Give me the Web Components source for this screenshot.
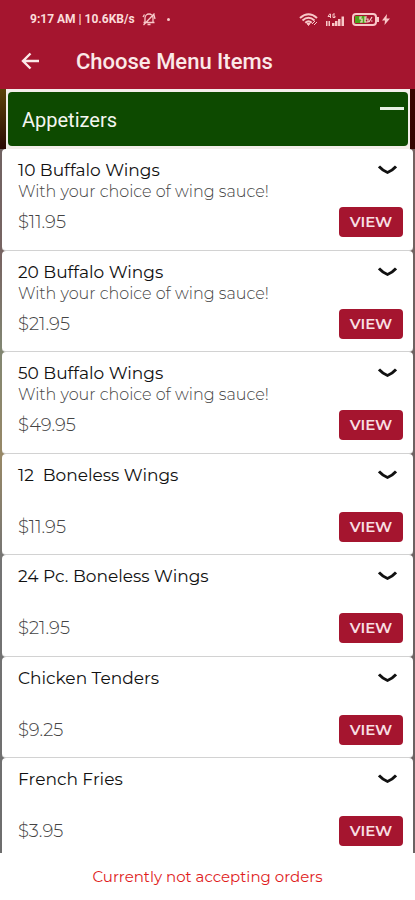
<!DOCTYPE html>
<html lang="en">
<head>
<meta charset="utf-8">
<meta name="viewport" content="width=device-width, initial-scale=1">
<title>Choose Menu Items</title>
<style>
  html,
  body {
    height: 100%;
    margin: 0;
  }
  body {
    --brand: #a5152f;
    --brand-text: #fbe9e8;
    --category: #0d4a00;
    --font-app: Roboto, sans-serif;
    font-family: Montserrat, Inter, sans-serif;
    color: #111;
  }
</style>
</head>
<body>
<menu-screen>
  <status-bar slot="top" time="9:17 AM" speed="10.6KB/s"></status-bar>
  <app-bar slot="top">Choose Menu Items</app-bar>
  <menu-category>Appetizers</menu-category>
  <menu-list></menu-list>
  <order-notice slot="bottom">Currently not accepting orders</order-notice>
</menu-screen>

<script>
const MENU_ITEMS = [
  { name: "10 Buffalo Wings", description: "With your choice of wing sauce!", price: "$11.95" },
  { name: "20 Buffalo Wings", description: "With your choice of wing sauce!", price: "$21.95" },
  { name: "50 Buffalo Wings", description: "With your choice of wing sauce!", price: "$49.95" },
  { name: "12  Boneless Wings", description: "", price: "$11.95" },
  { name: "24 Pc. Boneless Wings", description: "", price: "$21.95" },
  { name: "Chicken Tenders", description: "", price: "$9.25" },
  { name: "French Fries", description: "", price: "$3.95" },
];

// Page frame: fixed top and bottom, list in between
class MenuScreen extends HTMLElement {
  constructor() {
    super();
    this.attachShadow({ mode: "open" });
  }

  connectedCallback() {
    this.shadowRoot.innerHTML = `
      <style>
        :host {
          display: flex;
          flex-direction: column;
          height: 100vh;
        }
        header {
          background: var(--brand);
        }
        main {
          flex: 1;
          min-height: 0;
          overflow: hidden;
          background:
            linear-gradient(#5a4208, #2a0905 8%, #3a0a06 22%, #54602f 34%, #8a6410 48%, #333 62%, #222) left / 50% 100% no-repeat,
            linear-gradient(#3a0500, #260404 30%, #1c0808) right / 50% 100% no-repeat;
        }
      </style>
      <header><slot name="top"></slot></header>
      <main><slot></slot></main>
      <slot name="bottom"></slot>
    `;
  }
}

class StatusBar extends HTMLElement {
  constructor() {
    super();
    this.attachShadow({ mode: "open" });
  }

  connectedCallback() {
    this.shadowRoot.innerHTML = `
      <style>
        :host {
          display: flex;
          align-items: center;
          justify-content: space-between;
          height: 38px;
          padding: 0 25px 0 30px;
          color: #f8c8c8;
          font: 700 12px/14px var(--font-app);
        }
        .side {
          display: flex;
          align-items: center;
          gap: 2px;
        }
        .label {
          color: #fbdcda;
        }
        .icons {
          gap: 7px;
        }
        .power {
          display: flex;
          align-items: center;
          gap: 3px;
        }
        .dot {
          width: 3px;
          height: 3px;
          margin-left: 9px;
          border-radius: 50%;
          background: currentColor;
        }
        .bell {
          margin-left: 5px;
        }
        svg {
          display: block;
        }
      </style>
      <div class="side">
        <span class="label">${this.getAttribute("time")} | ${this.getAttribute("speed")}</span>
        <svg class="bell" width="14" height="14" viewBox="0 0 14 14" fill="none" stroke="currentColor" stroke-width="1.3">
          <path d="M3 10.500V6a4 4 0 0 1 8 0v4.500M1.500 10.500h11M5.500 12.500h3M1.500 13L12.500 1.500M1 5l1.500-2.500M13 7l-1-4"/>
        </svg>
        <span class="dot"></span>
      </div>
      <div class="side icons">
        <svg width="19" height="13" viewBox="0 0 19 13" fill="none" stroke="currentColor" stroke-width="2">
          <path d="M1 5Q9.500-2.500 18 5M3.500 7.500Q9.500 2 15.500 7.500M6.300 9.800Q9.500 7 12.700 9.800"/>
          <path d="M8 10.500h3l-1.500 2zM13 11l3-3M15 12l3-3" fill="currentColor" stroke-width="1"/>
        </svg>
        <svg width="20" height="13" viewBox="0 0 20 13" fill="currentColor">
          <path d="M7 10h2.500v3H7zM10 8h2.500v5H10zM13 6h2.500v7H13zM16.500 3.500H19V13h-2.500zM1 8h1.500v5H1zM3.500 8H5v5H3.500z"/>
          <path d="M5 .5L3 3.500h3M5.500 1v4M10 1H8v3.500h2V3H9" fill="none" stroke="currentColor"/>
        </svg>
        <div class="power">
          <svg width="27" height="13" viewBox="0 0 27 13">
            <rect x="1" y="1" width="23" height="11" rx="3" fill="none" stroke="currentColor" stroke-width="2"/>
            <path d="M25 4h2v5h-2z" fill="currentColor"/>
            <rect x="3" y="3" width="11" height="7" fill="#4da51c"/>
            <path d="M10 4H8v2h2v3H8M15 4h-2v5h3V6h-3M20 4l-3 5M19 8h1.500" fill="none" stroke="#f8d8d0" stroke-width="1.200"/>
          </svg>
          <svg width="8" height="13" viewBox="0 0 8 13" fill="currentColor">
            <path d="M5 1L0 7.500h3L2.500 12 8 5.500H4.500z"/>
          </svg>
        </div>
      </div>
    `;
  }
}

class AppBar extends HTMLElement {
  constructor() {
    super();
    this.attachShadow({ mode: "open" });
  }

  connectedCallback() {
    this.shadowRoot.innerHTML = `
      <style>
        :host {
          display: flex;
          align-items: center;
          gap: 32px;
          height: 51px;
          padding: 0 18px;
          color: var(--brand-text);
          font-family: var(--font-app);
        }
        h1 {
          margin: 0;
          padding-bottom: 4px;
          font-size: 22px;
          line-height: 26px;
          font-weight: 500;
        }
        button {
          padding: 0 0 6px;
          border: 0;
          background: none;
          color: inherit;
        }
        svg {
          display: block;
        }
      </style>
      <button type="button" aria-label="Back">
        <svg width="26" height="20" viewBox="0 0 26 20" fill="none" stroke="currentColor" stroke-width="2.400">
          <path d="M21 10H5M12.500 2.500L5 10l7.500 7.500"/>
        </svg>
      </button>
      <h1><slot></slot></h1>
    `;
  }
}

class MenuCategory extends HTMLElement {
  constructor() {
    super();
    this.attachShadow({ mode: "open" });
  }

  connectedCallback() {
    this.shadowRoot.innerHTML = `
      <style>
        :host {
          display: block;
          margin: 0 5px 0 6px;
          padding: 3px 2px;
          background: #f3eeea;
        }
        button {
          display: flex;
          justify-content: space-between;
          width: 100%;
          height: 54px;
          padding: 15px 4px 12px 14px;
          border: 0;
          border-radius: 4px;
          background: var(--category);
          color: #f4f6f0;
          font: 400 20px/27px var(--font-app);
        }
        .minus {
          width: 24px;
          height: 3px;
          background: #e6f0e2;
        }
      </style>
      <button type="button" aria-expanded="true">
        <slot></slot>
        <span class="minus"></span>
      </button>
    `;
  }
}

class MenuItem extends HTMLElement {
  constructor() {
    super();
    this.attachShadow({ mode: "open" });
  }

  connectedCallback() {
    this.shadowRoot.innerHTML = `
      <style>
        :host {
          display: block;
          box-sizing: border-box;
          min-height: 102px;
          padding: 10px 10px 10px 16px;
          border-bottom: 1px solid #d2d2d2;
          border-radius: 4px;
          background: #fff;
        }
        :host(:nth-child(even)) {
          min-height: 101px;
        }
        .row {
          display: flex;
          align-items: center;
          justify-content: space-between;
        }
        h2,
        p {
          margin: 0;
          line-height: 22px;
          font-weight: 400;
          white-space: pre;
        }
        h2 {
          font-size: 17px;
        }
        p {
          min-height: 22px;
          font-size: 16px;
          font-weight: 300;
          color: #444;
        }
        .bottom {
          margin-top: 4px;
        }
        .price {
          font-size: 18px;
          line-height: 30px;
          font-weight: 300;
          color: #444;
        }
        button {
          padding: 0;
          border: 0;
          background: none;
        }
        .toggle {
          padding: 0 6px;
        }
        .view {
          width: 64px;
          height: 30px;
          border-radius: 4px;
          background: var(--brand);
          color: #f8dfe2;
          font: 600 15px/30px Montserrat, Inter, sans-serif;
        }
        svg {
          display: block;
        }
      </style>
      <div class="row">
        <h2></h2>
        <button class="toggle" type="button" aria-label="Show details">
          <svg width="19" height="10" viewBox="0 0 19 10" fill="none" stroke="#111" stroke-width="2.800">
            <path d="M1 1.500Q4 5 9.500 7.500Q15 5 18 1.500"/>
          </svg>
        </button>
      </div>
      <p></p>
      <div class="row bottom">
        <span class="price"></span>
        <button class="view" type="button">VIEW</button>
      </div>
    `;
    this.shadowRoot.querySelector("h2").textContent = this.getAttribute("name");
    this.shadowRoot.querySelector("p").textContent = this.getAttribute("description");
    this.shadowRoot.querySelector(".price").textContent = this.getAttribute("price");
  }
}

class MenuList extends HTMLElement {
  constructor() {
    super();
    this.attachShadow({ mode: "open" });
  }

  connectedCallback() {
    this.shadowRoot.innerHTML = `
      <style>
        :host {
          display: block;
          padding: 0 2px;
          background: rgba(160, 160, 160, 0.6);
        }
      </style>
      <div class="list"></div>
    `;
    const list = this.shadowRoot.querySelector(".list");
    MENU_ITEMS.forEach((item) => {
      const card = document.createElement("menu-item");
      for (let key in item) {
        card.setAttribute(key, item[key]);
      }
      list.appendChild(card);
    });
  }
}

class OrderNotice extends HTMLElement {
  constructor() {
    super();
    this.attachShadow({ mode: "open" });
  }

  connectedCallback() {
    this.shadowRoot.innerHTML = `
      <style>
        :host {
          display: block;
          padding: 13px 0 12px;
          background: #fff;
          color: #e01c1c;
          font-size: 15px;
          line-height: 22px;
          text-align: center;
        }
      </style>
      <slot></slot>
    `;
  }
}

// Define the custom elements
customElements.define("menu-screen", MenuScreen);
customElements.define("status-bar", StatusBar);
customElements.define("app-bar", AppBar);
customElements.define("menu-category", MenuCategory);
customElements.define("menu-item", MenuItem);
customElements.define("menu-list", MenuList);
customElements.define("order-notice", OrderNotice);
</script>
</body>
</html>
